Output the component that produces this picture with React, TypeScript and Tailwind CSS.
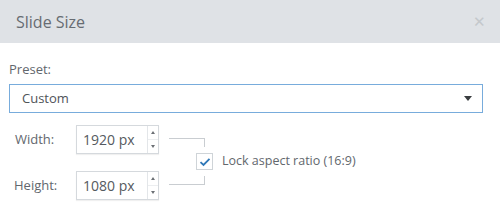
import { useState } from 'react';

const font = { fontFamily: '"Open Sans", "Noto Sans", sans-serif' };

const SpinBox = ({ value }: { value: string }) => (
    <div className="flex h-[29px] w-[83px] border border-[#d5d9dd] bg-white shadow-[0_1px_1px_rgba(0,0,0,0.06)]">
        <div className="flex flex-1 items-center pl-[6px] text-[14px] text-[#555a60]">{value}</div>
        <div className="flex w-[11px] flex-col border-l border-[#e3e6e9]">
            <div className="flex flex-1 items-center justify-center border-b border-[#eceef0]">
                <span className="block h-0 w-0 border-x-[2.5px] border-b-[3px] border-x-transparent border-b-[#6b6f74]" />
            </div>
            <div className="flex flex-1 items-center justify-center">
                <span className="block h-0 w-0 border-x-[2.5px] border-t-[3px] border-x-transparent border-t-[#6b6f74]" />
            </div>
        </div>
    </div>
);

export default function App() {
    const [locked, setLocked] = useState(true);

    return (
        <div className="h-[213px] w-[500px] overflow-hidden bg-white" style={font}>
            {/* Header */}
            <div className="flex h-[43px] items-center justify-between bg-[#dfe2e6] pl-[16px] pr-[14px]">
                <span className="text-[16px] text-[#676c72]">Slide Size</span>
                <span className="text-[15px] leading-none text-[#c4c8cc]">✕</span>
            </div>

            {/* Body */}
            <div className="px-[9px] pt-[17px]">
                <div className="text-[13px] leading-[18px] text-[#62676d]">Preset:</div>
                <div className="mt-[6px] flex h-[29px] w-[474px] items-center justify-between border border-[#78acdc] pl-[12px] pr-[10px]">
                    <span className="text-[13px] text-[#4f5459]">Custom</span>
                    <span className="block h-0 w-0 border-x-[4px] border-t-[5px] border-x-transparent border-t-[#3a3d40]" />
                </div>

                <div className="mt-[12px] flex">
                    <div className="flex flex-col gap-[17px]">
                        <div className="flex items-center">
                            <span className="w-[67px] pl-[6px] text-[13px] text-[#62676d]">Width:</span>
                            <SpinBox value="1920 px" />
                        </div>
                        <div className="flex items-center">
                            <span className="w-[67px] pl-[5px] text-[13px] text-[#62676d]">Height:</span>
                            <SpinBox value="1080 px" />
                        </div>
                    </div>

                    {/* Lock bracket */}
                    <div className="ml-[10px] flex flex-col pt-[13px]">
                        <div className="h-[9px] w-[36px] border-r border-t border-[#c9cdd1]" />
                        <div className="flex h-[29px] items-center">
                            <button
                                onClick={() => setLocked(!locked)}
                                className="ml-[27px] flex h-[17px] w-[17px] items-center justify-center border border-[#cfd4d8] bg-white"
                            >
                                {locked && (
                                    <svg width="12" height="10" viewBox="0 0 12 10">
                                        <path d="M1.5 5.2 L4.5 8 L10.5 1.8" fill="none" stroke="#2f78b8" strokeWidth="1.8" />
                                    </svg>
                                )}
                            </button>
                            <span className="ml-[9px] whitespace-nowrap text-[12.5px] text-[#62676d]">Lock aspect ratio (16:9)</span>
                        </div>
                        <div className="h-[9px] w-[36px] border-b border-r border-[#c9cdd1]" />
                    </div>
                </div>
            </div>
        </div>
    );
}
